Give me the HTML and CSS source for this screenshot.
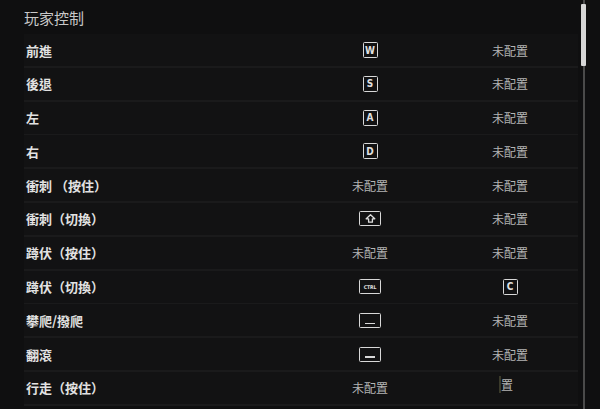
FILE: index.html
```html
<!DOCTYPE html>
<html lang="zh-Hant">
<head>
  <meta charset="UTF-8">
  <title>玩家控制</title>
  <link rel="stylesheet" href="styles.css">
</head>
<body>

  <div class="panel">
    <h2 class="title">玩家控制</h2>

    <div class="list">
      <div class="row">
        <span class="label">前進</span>
        <span class="bind"><span class="key">W</span></span>
        <span class="bind alt">未配置</span>
      </div>
      <div class="row">
        <span class="label">後退</span>
        <span class="bind"><span class="key">S</span></span>
        <span class="bind alt">未配置</span>
      </div>
      <div class="row">
        <span class="label">左</span>
        <span class="bind"><span class="key">A</span></span>
        <span class="bind alt">未配置</span>
      </div>
      <div class="row">
        <span class="label">右</span>
        <span class="bind"><span class="key">D</span></span>
        <span class="bind alt">未配置</span>
      </div>
      <div class="row">
        <span class="label">衝刺 （按住）</span>
        <span class="bind">未配置</span>
        <span class="bind alt">未配置</span>
      </div>
      <div class="row">
        <span class="label">衝刺（切換）</span>
        <span class="bind">
          <span class="key wide">
            <svg width="11" height="9" viewBox="0 0 11 9"><path d="M5.5 0.8 L1.2 4.8 H3.6 V8.2 H7.4 V4.8 H9.8 Z" fill="none" stroke="#ddd" stroke-width="1.3" stroke-linejoin="round"/></svg>
          </span>
        </span>
        <span class="bind alt">未配置</span>
      </div>
      <div class="row">
        <span class="label">蹲伏（按住）</span>
        <span class="bind">未配置</span>
        <span class="bind alt">未配置</span>
      </div>
      <div class="row">
        <span class="label">蹲伏（切換）</span>
        <span class="bind"><span class="key wide tiny">CTRL</span></span>
        <span class="bind alt"><span class="key">C</span></span>
      </div>
      <div class="row">
        <span class="label">攀爬/撥爬</span>
        <span class="bind"><span class="key wide"><span class="space"></span></span></span>
        <span class="bind alt">未配置</span>
      </div>
      <div class="row">
        <span class="label">翻滾</span>
        <span class="bind"><span class="key wide"><span class="space"></span></span></span>
        <span class="bind alt">未配置</span>
      </div>
      <div class="row">
        <span class="label">行走（按住）</span>
        <span class="bind">未配置</span>
        <span class="bind alt"><span class="cut">置</span></span>
      </div>
    </div>
  </div>

  <div class="scrollbar">
    <div class="thumb"></div>
  </div>

</body>
</html>
```

FILE: styles.css
```css
body {
  margin: 0;
  height: 409px;
  overflow: hidden;
  background: #0f0f10;
  font-family: "Noto Sans CJK TC", "Noto Sans", sans-serif;
  color: #ddd;
  display: flex;
}
.panel {
  width: 554px;
  padding-left: 24px;
}
.title {
  margin: 0;
  height: 34px;
  line-height: 36px;
  font-size: 15px;
  font-weight: 400;
  color: #c8c8c8;
}
.list {
  display: flex;
  flex-direction: column;
  gap: 1.8px;
  background: #1a1a1b;
  padding-bottom: 2px;
}
.row {
  height: 32px;
  display: grid;
  grid-template-columns: 280px 132px 142px;
  align-items: center;
  background: #121213;
}
.label {
  padding-left: 2px;
  font-size: 13px;
  font-weight: 700;
  color: #e2e2e2;
}
.bind {
  display: flex;
  justify-content: center;
  align-items: center;
  font-size: 12px;
  color: #b4b4b4;
}
.alt {
  padding-left: 6px;
}
.key {
  box-sizing: border-box;
  width: 15px;
  height: 16px;
  border: 1.5px solid #d8d8d8;
  border-radius: 1.5px;
  display: flex;
  justify-content: center;
  align-items: center;
  font-family: "DejaVu Sans Condensed", "DejaVu Sans", sans-serif;
  font-size: 10px;
  font-weight: 700;
  color: #e0e0e0;
}
.wide {
  width: 22px;
  height: 15px;
  position: relative;
}
.tiny {
  font-size: 5px;
  letter-spacing: 0;
}
.space {
  position: absolute;
  left: 5px;
  right: 5px;
  bottom: 3px;
  height: 1.3px;
  background: #d8d8d8;
}
.cut {
  margin-left: -8px;
  margin-top: -6px;
  font-size: 12px;
  color: #b4b4b4;
  border-left: 2px solid #3a3a2a;
}
.scrollbar {
  margin-left: 5px;
  width: 2px;
  background: #4a4a4a;
  position: relative;
}
.thumb {
  position: absolute;
  left: -2px;
  top: 4px;
  width: 5px;
  height: 62px;
  background: #d6d6d6;
  border-radius: 1px;
}
```
